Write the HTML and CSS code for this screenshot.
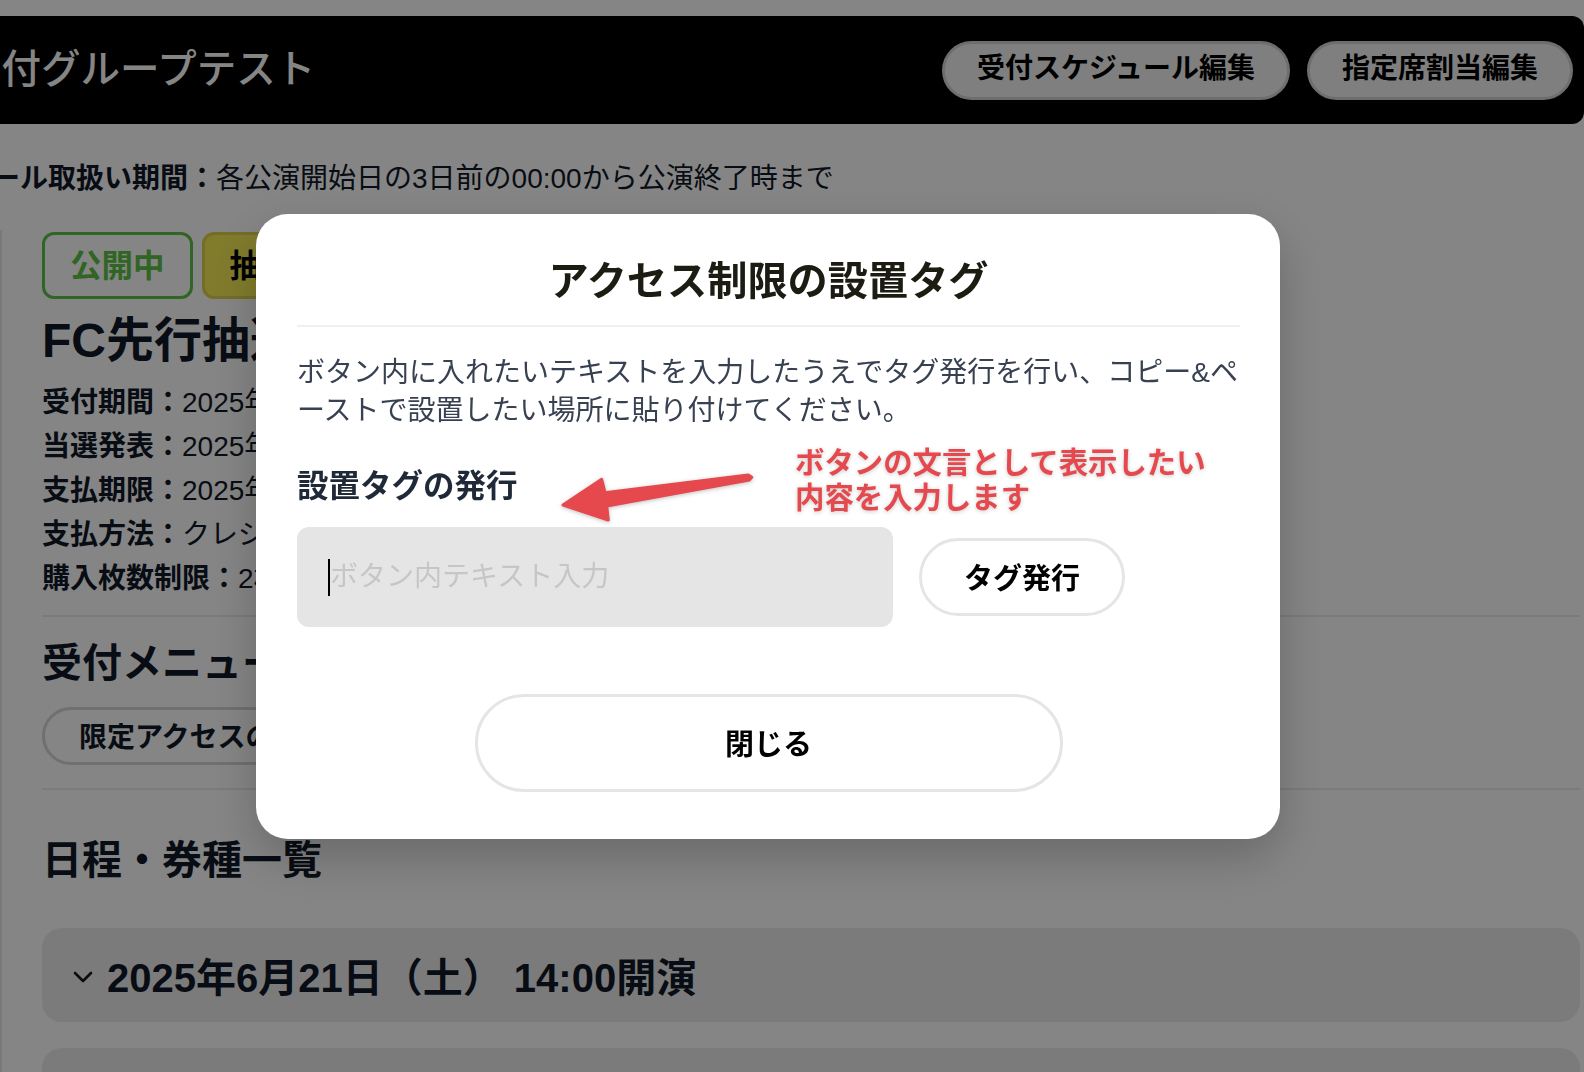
FILE: index.html
```html
<!DOCTYPE html>
<html lang="ja">
<head>
<meta charset="utf-8">
<title>アクセス制限の設置タグ</title>
<link rel="stylesheet" href="styles.css">
</head>
<body>
<div class="page">
  <header class="topbar">
    <h1 class="topbar-title">受付グループテスト</h1>
    <div class="topbar-actions">
      <button class="topbar-btn" type="button">受付スケジュール編集</button>
      <button class="topbar-btn" type="button">指定席割当編集</button>
    </div>
  </header>

  <p class="period"><b>ール取扱い期間：</b>各公演開始日の3日前の00:00から公演終了時まで</p>

  <section class="card">
    <div class="badges">
      <span class="badge badge-open">公開中</span>
      <span class="badge badge-lottery">抽選受付中</span>
    </div>
    <h2 class="reception-title">FC先行抽選受付</h2>
    <dl class="info">
      <div class="info-row"><dt>受付期間：</dt><dd>2025年5月1日（木）12:00〜5月10日（土）23:59</dd></div>
      <div class="info-row"><dt>当選発表：</dt><dd>2025年5月15日（木）15:00</dd></div>
      <div class="info-row"><dt>支払期限：</dt><dd>2025年5月18日（日）23:59</dd></div>
      <div class="info-row"><dt>支払方法：</dt><dd>クレジットカード</dd></div>
      <div class="info-row"><dt>購入枚数制限：</dt><dd>2枚まで</dd></div>
    </dl>

    <hr class="divider divider-first">

    <h3 class="section-title section-menu">受付メニュー</h3>
    <div class="menu">
      <button class="menu-btn" type="button">限定アクセスの設置タグ</button>
    </div>

    <hr class="divider divider-second">

    <h3 class="section-title section-schedule">日程・券種一覧</h3>
    <div class="accordion">
      <div class="acc-item">
        <svg class="chevron" width="20" height="12" viewBox="0 0 20 12"><polyline points="2,2 10,10 18,2" fill="none" stroke="#1a1a0f" stroke-width="2.6" stroke-linecap="round" stroke-linejoin="round"/></svg>
        <span class="acc-label">2025年6月21日（土） 14:00開演</span>
      </div>
      <div class="acc-item">
        <svg class="chevron" width="20" height="12" viewBox="0 0 20 12"><polyline points="2,2 10,10 18,2" fill="none" stroke="#1a1a0f" stroke-width="2.6" stroke-linecap="round" stroke-linejoin="round"/></svg>
        <span class="acc-label">2025年6月22日（日） 14:00開演</span>
      </div>
    </div>
  </section>
</div>

<div class="overlay">
  <div class="modal" role="dialog" aria-labelledby="modal-title">
    <h2 class="modal-title" id="modal-title">アクセス制限の設置タグ</h2>
    <p class="modal-desc">ボタン内に入れたいテキストを入力したうえでタグ発行を行い、コピー&amp;ペ<br>ーストで設置したい場所に貼り付けてください。</p>
    <h3 class="modal-sub">設置タグの発行</h3>
    <div class="tag-row">
      <div class="tag-input-wrap">
        <input class="tag-input" type="text" placeholder="ボタン内テキスト入力">
        <span class="caret"></span>
      </div>
      <button class="tag-btn" type="button">タグ発行</button>
    </div>
    <div class="modal-footer">
      <button class="close-btn" type="button">閉じる</button>
    </div>

    <svg class="anno-arrow" width="195" height="54" viewBox="0 0 195 54">
      <polygon points="3,35 41.7,9.3 45,22.7 188.3,5 191.7,7.3 189.3,10 46.7,36 48.3,50" fill="#e5484d" stroke="#e5484d" stroke-width="3" stroke-linejoin="round"/>
    </svg>
    <p class="anno-text">ボタンの文言として表示したい<br>内容を入力します</p>
  </div>
</div>
</body>
</html>
```

FILE: styles.css
```css
* {
  box-sizing: border-box;
}

html,
body {
  margin: 0;
  padding: 0;
}

body {
  width: 1584px;
  height: 1072px;
  overflow: hidden;
  background: #ffffff;
  color: #111827;
  font-family: "Liberation Sans", "Noto Sans CJK JP", sans-serif;
}

button,
input {
  font-family: "Liberation Sans", "Noto Sans CJK JP", sans-serif;
}

/* ---------- background page ---------- */

.page {
  padding-top: 16px;
}

.topbar {
  height: 108px;
  background: #000000;
  border-radius: 0 12px 12px 0;
  display: flex;
  align-items: center;
  justify-content: space-between;
  padding-right: 11px;
}

.topbar-title {
  margin: 0 0 0 -38px;
  font-size: 39.5px;
  font-weight: 500;
  line-height: 1;
  color: #ffffff;
  white-space: nowrap;
}

.topbar-actions {
  display: flex;
  gap: 17px;
}

.topbar-btn {
  height: 59px;
  padding: 0 32px 2px;
  border: 3px solid #d4d4d4;
  border-radius: 999px;
  background: #f4f4f4;
  color: #000000;
  font-size: 28px;
  font-weight: 700;
  line-height: 1;
}

.period {
  margin: 35px 0 0 -8px;
  font-size: 28px;
  line-height: 40px;
  white-space: nowrap;
}

.period b {
  font-weight: 700;
}

.card {
  margin-top: 31px;
  border-left: 2px solid #e8e8e8;
  padding: 2px 4px 0 40px;
}

.badges {
  display: flex;
  gap: 9px;
}

.badge {
  height: 67px;
  display: flex;
  align-items: center;
  padding: 2px 25px 0;
  border: 3px solid;
  border-radius: 12px;
  font-size: 31.5px;
  font-weight: 700;
  line-height: 1;
  white-space: nowrap;
}

.badge-open {
  border-color: #5cc246;
  color: #5cc246;
  background: #ffffff;
}

.badge-lottery {
  border-color: #dcd24c;
  background: #f7ee55;
  color: #000000;
}

.reception-title {
  margin: 14px 0 0;
  font-size: 48px;
  font-weight: 700;
  line-height: 56px;
  white-space: nowrap;
}

.info {
  margin: 12px 0 0;
}

.info-row {
  display: flex;
  font-size: 28px;
  line-height: 44px;
  white-space: nowrap;
}

.info-row dt {
  font-weight: 700;
}

.info-row dd {
  margin: 0;
}

.divider {
  margin: 0;
  border: 0;
  height: 2px;
  background: #ebebeb;
}

.divider-first {
  margin-top: 14px;
}

.divider-second {
  margin-top: 23px;
}

.section-title {
  margin: 0;
  font-size: 40px;
  font-weight: 700;
  line-height: 52px;
}

.section-menu {
  margin-top: 20px;
}

.section-schedule {
  margin-top: 44px;
}

.menu {
  margin-top: 18px;
  display: flex;
}

.menu-btn {
  height: 58px;
  padding: 0 34px 3px;
  border: 3px solid #d6d6d6;
  border-radius: 999px;
  background: #ffffff;
  color: #111827;
  font-size: 28px;
  font-weight: 700;
}

.accordion {
  margin-top: 42px;
  display: flex;
  flex-direction: column;
  gap: 26px;
}

.acc-item {
  height: 94px;
  border-radius: 20px;
  background: #ececec;
  display: flex;
  align-items: center;
  gap: 14px;
  padding-left: 31px;
}

.chevron {
  flex: none;
  margin-top: 4px;
}

.acc-label {
  font-size: 40px;
  font-weight: 700;
  white-space: nowrap;
}

/* ---------- modal ---------- */

.overlay {
  position: fixed;
  inset: 0;
  background: rgba(0, 0, 0, 0.478);
  padding: 214px 0 0 256px;
}

.modal {
  position: relative;
  width: 1024px;
  background: #ffffff;
  border-radius: 32px;
  padding: 40px 40px 47px 41px;
  box-shadow: 0 18px 48px rgba(0, 0, 0, 0.22);
}

.modal-title {
  margin: 0;
  padding-bottom: 15px;
  border-bottom: 2px solid #eef0f2;
  text-align: center;
  font-size: 40.2px;
  font-weight: 700;
  line-height: 56px;
  color: #1c1c12;
}

.modal-desc {
  margin: 27px 0 0;
  font-size: 28px;
  line-height: 37.5px;
  color: #374151;
  white-space: nowrap;
}

.modal-sub {
  margin: 35px 0 0;
  font-size: 31.5px;
  font-weight: 700;
  line-height: 44px;
  color: #1f2937;
}

.tag-row {
  margin-top: 19px;
  display: flex;
  align-items: center;
  gap: 26px;
}

.tag-input-wrap {
  position: relative;
  width: 596px;
  height: 100px;
  flex: none;
}

.tag-input {
  width: 100%;
  height: 100%;
  border: 0;
  border-radius: 12px;
  background: #e5e5e5;
  padding: 0 32px 0 33px;
  font-size: 28px;
  color: #111827;
  outline: none;
}

.tag-input::placeholder {
  color: #c6c6c6;
}

.caret {
  position: absolute;
  left: 31px;
  top: 32px;
  width: 2px;
  height: 37px;
  background: #000000;
}

.tag-btn {
  width: 206px;
  height: 78px;
  padding-bottom: 3px;
  border: 3px solid #e5e5e5;
  border-radius: 999px;
  background: #ffffff;
  color: #000000;
  font-size: 29px;
  font-weight: 700;
}

.modal-footer {
  margin-top: 67px;
  display: flex;
  justify-content: center;
}

.close-btn {
  width: 588px;
  height: 98px;
  padding-bottom: 4px;
  border: 3px solid #e5e5e5;
  border-radius: 999px;
  background: #ffffff;
  color: #000000;
  font-size: 29px;
  font-weight: 700;
}

/* annotation layered over the dialog */

.anno-arrow {
  position: absolute;
  left: 304px;
  top: 256px;
  overflow: visible;
  filter: drop-shadow(0 1px 2px rgba(0, 0, 0, 0.25));
}

.anno-text {
  position: absolute;
  left: 539px;
  top: 231px;
  margin: 0;
  font-size: 29.4px;
  font-weight: 700;
  line-height: 35px;
  color: #e5484d;
  white-space: nowrap;
  text-shadow: 0 1px 4px rgba(0, 0, 0, 0.22);
}
```
